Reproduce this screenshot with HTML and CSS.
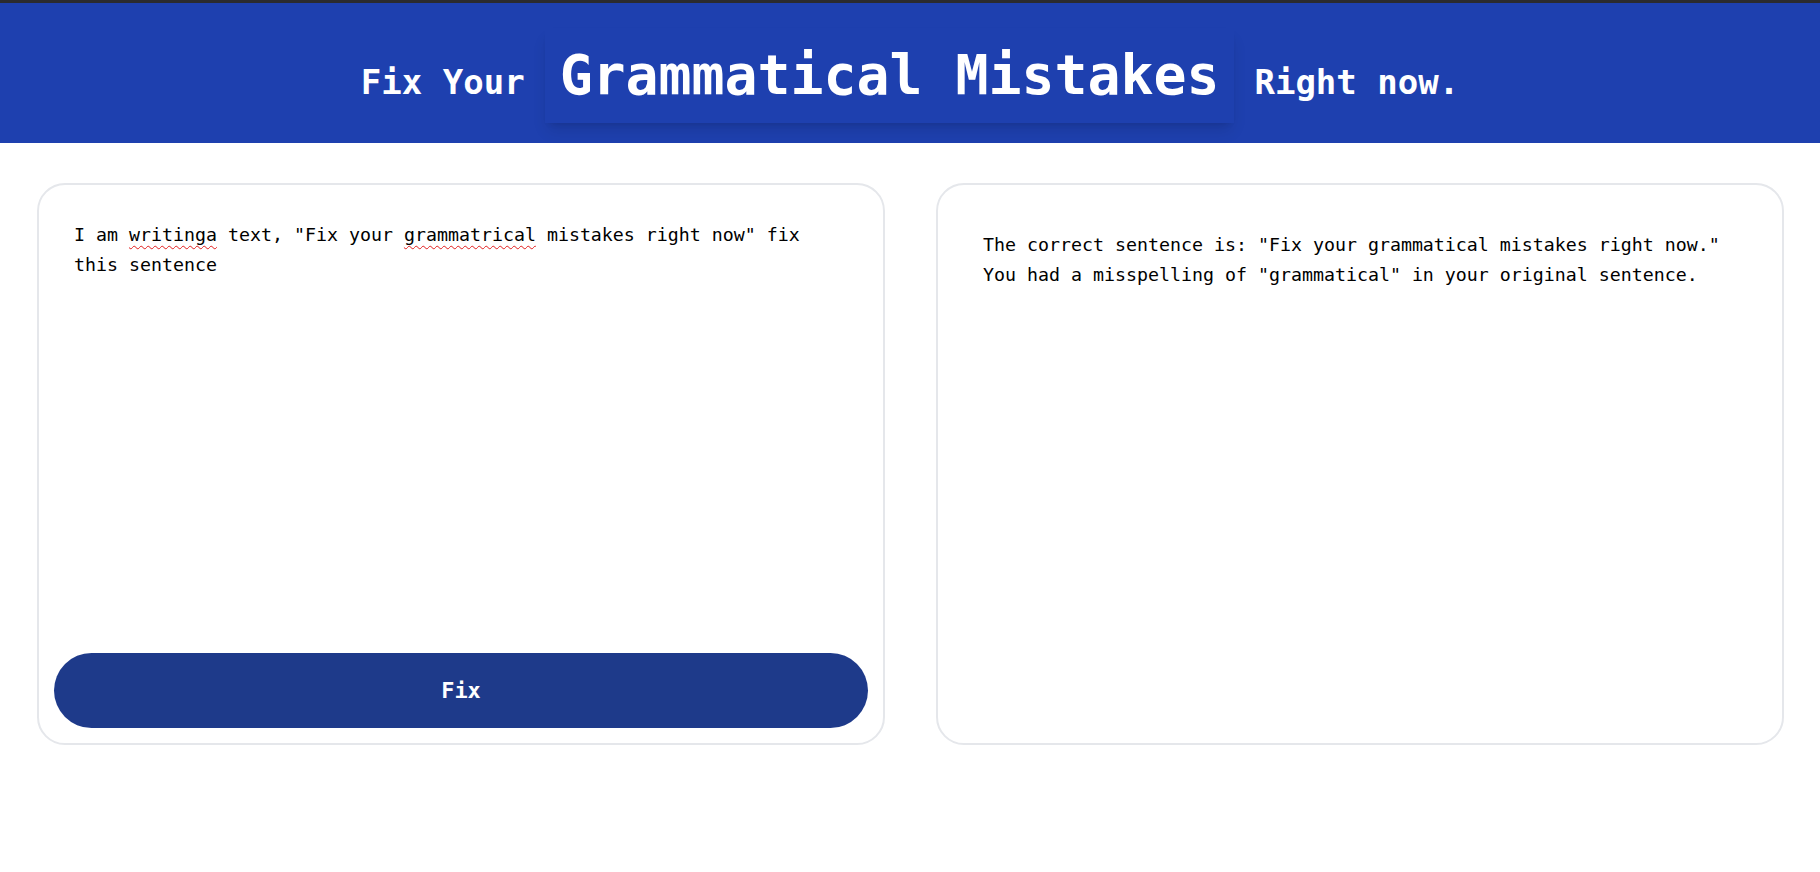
FILE: index.html
```html
<!DOCTYPE html>
<html lang="en">
<head>
<meta charset="utf-8">
<title>Grammar Fixer</title>
<link rel="stylesheet" href="styles.css">
</head>
<body>
<header class="hero">
  <span class="hero-small">Fix Your</span>
  <span class="hero-box">Grammatical Mistakes</span>
  <span class="hero-small">Right now.</span>
</header>
<main class="panels">
  <section class="card card-input">
    <div class="input-text">I am <span class="misspelled">writinga</span> text, "Fix your <span class="misspelled">grammatrical</span> mistakes right now" fix<br>this sentence</div>
    <button class="fix-btn" type="button">Fix</button>
  </section>
  <section class="card card-output">
    <div class="output-text">The correct sentence is: "Fix your grammatical mistakes right now."<br>You had a misspelling of "grammatical" in your original sentence.</div>
  </section>
</main>
</body>
</html>
```

FILE: styles.css
```css
* {
  box-sizing: border-box;
}

html, body {
  margin: 0;
  padding: 0;
  background: #ffffff;
}

body {
  font-family: "DejaVu Sans Mono", "Liberation Mono", monospace;
  color: #000000;
}

.hero {
  display: flex;
  justify-content: center;
  align-items: baseline;
  gap: 20px;
  background: #1e40af;
  border-top: 3px solid #2b2b2f;
  padding: 25px 0 20px;
  height: 143px;
  color: #ffffff;
}

.hero-small {
  font-size: 34px;
  font-weight: bold;
}

.hero-box {
  font-size: 54.8px;
  font-weight: bold;
  line-height: 95px;
  height: 95px;
  padding: 0 15px;
  background: #1e40af;
  box-shadow: 0 10px 15px -3px rgba(0, 0, 0, 0.12), 0 4px 6px -4px rgba(0, 0, 0, 0.12);
}

.panels {
  display: grid;
  grid-template-columns: minmax(0, 1fr) minmax(0, 1fr);
  gap: 51px;
  padding: 40px 36px 0 37px;
}

.card {
  height: 562px;
  border: 2px solid #e5e7eb;
  border-radius: 28px;
  background: #ffffff;
}

.card-input {
  display: flex;
  flex-direction: column;
  padding: 15px;
}

.input-text {
  flex: 1;
  padding: 20px 18px 20px 20px;
  font-size: 18.27px;
  line-height: 30px;
}

.misspelled {
  text-decoration: underline wavy #e11d1d;
  text-decoration-thickness: 1px;
  text-underline-offset: 4px;
}

.fix-btn {
  height: 75px;
  width: 100%;
  border: none;
  border-radius: 999px;
  background: #1e3a8a;
  color: #ffffff;
  font-family: "DejaVu Sans Mono", "Liberation Mono", monospace;
  font-size: 21.9px;
  font-weight: bold;
  cursor: pointer;
}

.card-output {
  padding: 45px 44px 45px 45px;
}

.output-text {
  font-size: 18.27px;
  line-height: 30px;
}
```
